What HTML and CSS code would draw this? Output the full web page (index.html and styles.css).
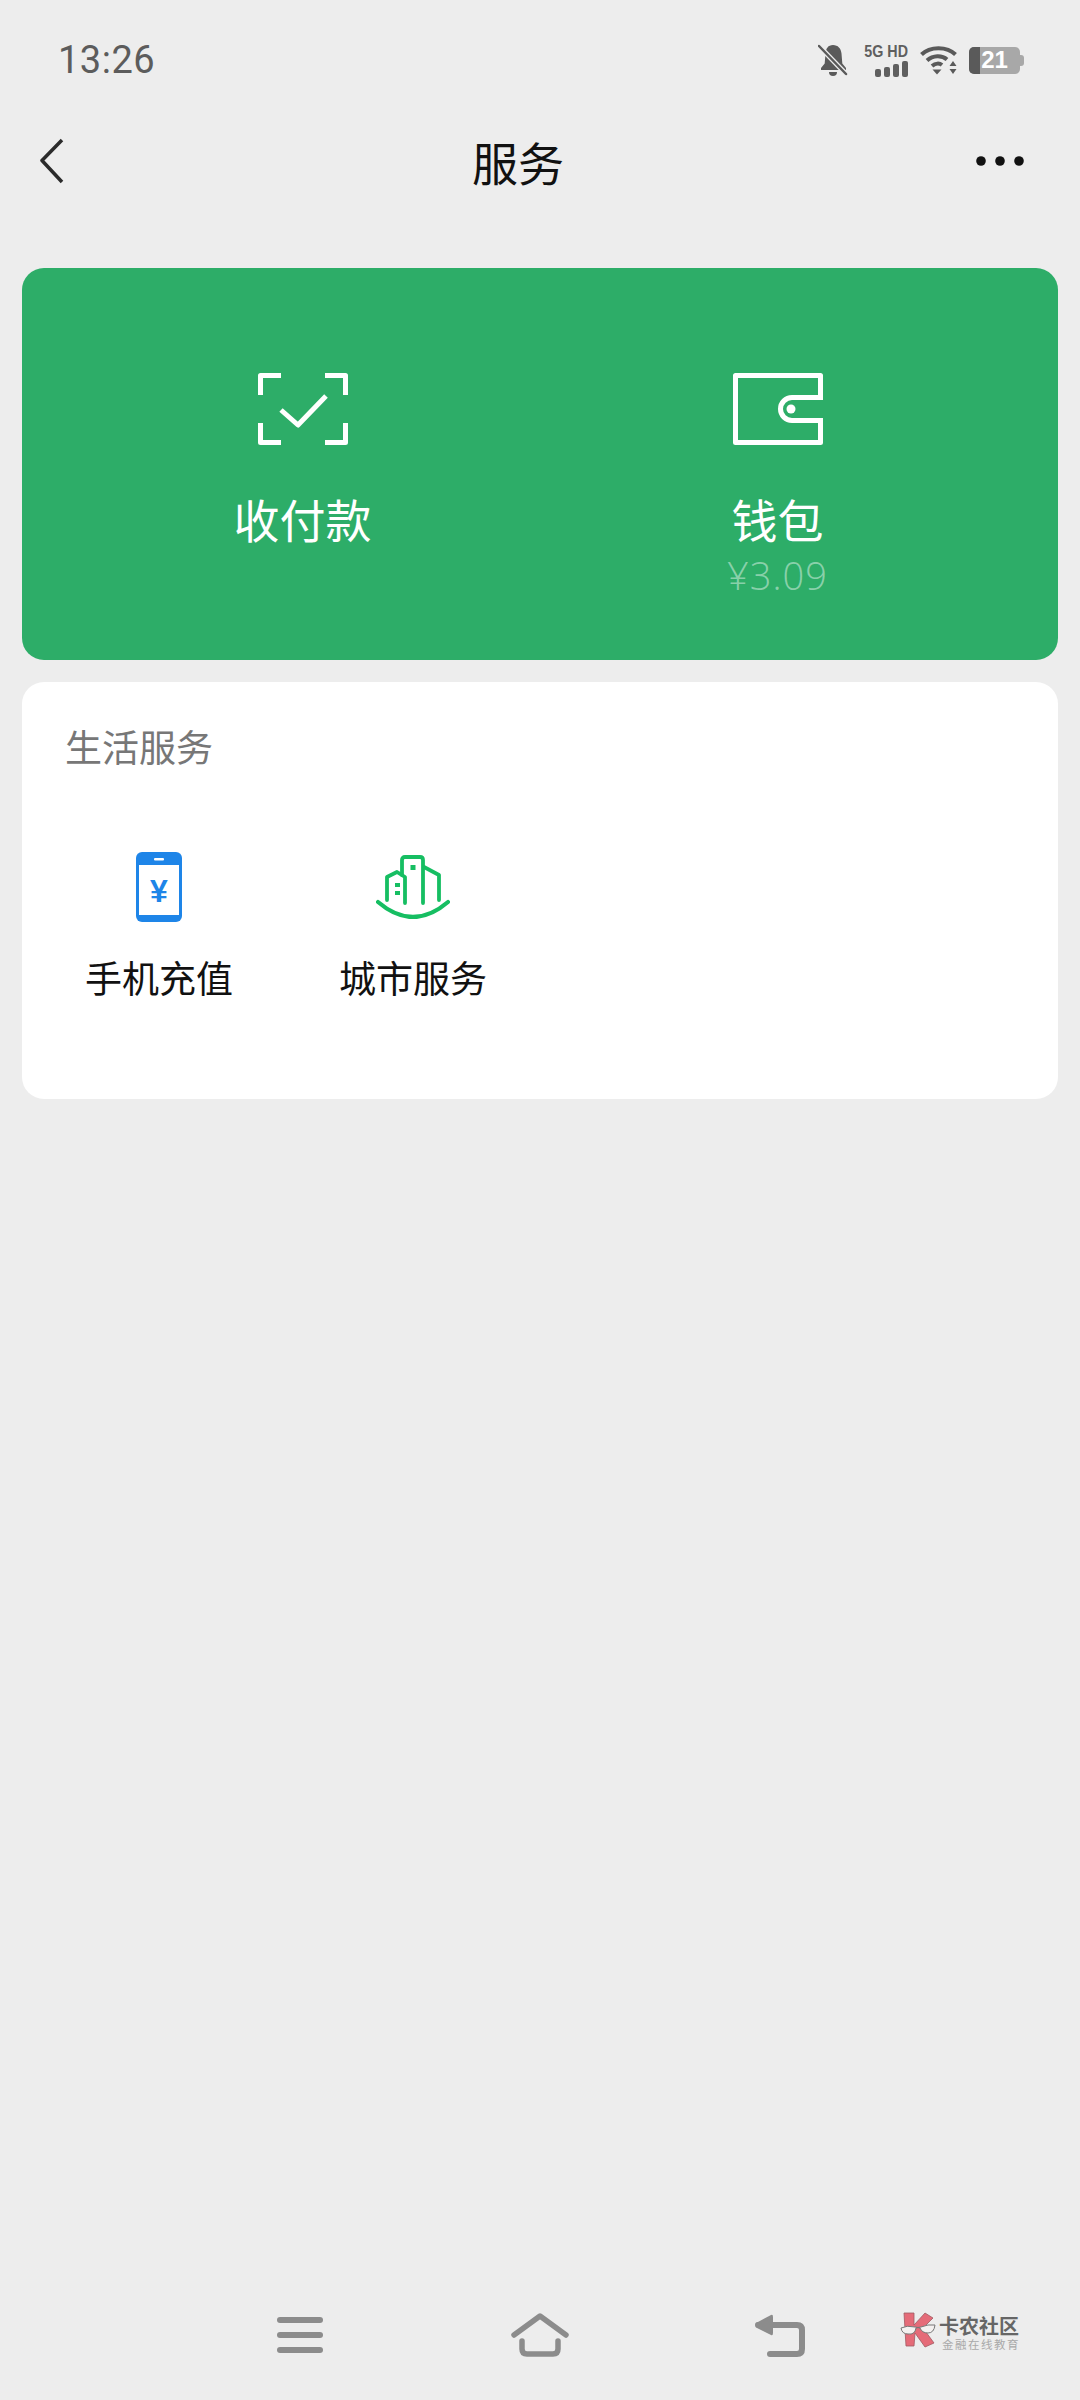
FILE: index.html

```html
<!DOCTYPE html>
<html lang="zh-CN">
<head>
  <meta charset="UTF-8" />
  <meta name="viewport" content="width=device-width, initial-scale=1.0"/>
  <title>服务</title>
  <link rel="stylesheet" href="styles.css">
</head>
<body>
  <div class="page">
    <header class="status-bar">
      <span class="time">13:26</span>
      <div class="status-icons">
        <svg class="bell" width="30" height="32" viewBox="0 0 30 32">
          <path d="M15 1c5 0 8 3.500 8.500 8.500l.8 10 3.700 4.500v2H3v-2l3.700-4.500.8-10C8 4.500 10 1 15 1z" fill="#5a5a5a"/>
          <path d="M11 28h8a4 4 0 0 1-8 0z" fill="#5a5a5a"/>
          <path d="M1 2l27 28" stroke="#ededed" stroke-width="5"/>
          <path d="M1 2l27 28" stroke="#5a5a5a" stroke-width="2.500" stroke-linecap="round"/>
        </svg>
        <div class="signal">
          <span class="signal-label">5G HD</span>
          <div class="signal-bars">
            <i class="bar bar-1"></i>
            <i class="bar bar-2"></i>
            <i class="bar bar-3"></i>
            <i class="bar bar-4"></i>
          </div>
        </div>
        <svg class="wifi" width="38" height="30" viewBox="0 0 38 30">
          <g fill="none" stroke="#5a5a5a" stroke-width="4">
            <path d="M1.500 9.500C10 1 27 1 35.500 9.500"/>
            <path d="M7 15.500c6-5.500 15-5.500 20 -1"/>
            <path d="M12 21c3.500-3 7.500-3 10 -1"/>
          </g>
          <path d="M12.500 24.500h9L17 29.500z" fill="#5a5a5a"/>
          <path d="M29.500 21h7l-3.500-5zM29.500 24h7l-3.500 5z" fill="#5a5a5a"/>
        </svg>
        <div class="battery">
          <div class="battery-level"></div>
          <span class="battery-text">21</span>
          <div class="battery-tip"></div>
        </div>
      </div>
    </header>

    <nav class="title-bar">
      <svg width="24" height="46" viewBox="0 0 24 46">
        <path d="M22 2L2 22.500 22 44" fill="none" stroke="#2b2b2b" stroke-width="3.500" stroke-linejoin="round"/>
      </svg>
      <h1 class="title">服务</h1>
      <svg width="48" height="10" viewBox="0 0 48 10">
        <circle cx="5" cy="5" r="4.800" fill="#111"/>
        <circle cx="24" cy="5" r="4.800" fill="#111"/>
        <circle cx="43" cy="5" r="4.800" fill="#111"/>
      </svg>
    </nav>

    <main class="content">
      <section class="pay-card">
        <div class="pay-item">
          <svg width="90" height="72" viewBox="0 0 90 72">
            <g fill="none" stroke="#fff" stroke-width="5" stroke-linejoin="round">
              <path d="M2.500 22V2.500H23"/>
              <path d="M67 2.500H87.500V22"/>
              <path d="M2.500 50V69.500H23"/>
              <path d="M67 69.500H87.500V50"/>
              <path d="M23 37l17 15 28-29"/>
            </g>
          </svg>
          <span class="pay-label">收付款</span>
        </div>
        <div class="pay-item">
          <svg width="90" height="72" viewBox="0 0 90 72">
            <path d="M87.500 24.500V2.500H2.500V69.500H87.500V47.500" fill="none" stroke="#fff" stroke-width="5" stroke-linejoin="round"/>
            <path d="M90 24.500H59a11.500 11.500 0 0 0 0 23H90" fill="none" stroke="#fff" stroke-width="5"/>
            <circle cx="58" cy="36" r="4.500" fill="#fff"/>
          </svg>
          <span class="pay-label">钱包</span>
          <span class="pay-amount">¥3.09</span>
        </div>
      </section>

      <section class="service-card">
        <h2 class="service-title">生活服务</h2>
        <div class="service-grid">
          <div class="service-item">
            <div class="service-icon">
              <svg width="46" height="70" viewBox="0 0 46 70">
                <rect width="46" height="70" rx="6" fill="#1e85e8"/>
                <rect x="3" y="13" width="40" height="50" fill="#fff"/>
                <rect x="18" y="6" width="10" height="2.500" rx="1" fill="#fff"/>
                <text x="23" y="50" text-anchor="middle" class="phone-yen">¥</text>
              </svg>
            </div>
            <span class="service-label">手机充值</span>
          </div>
          <div class="service-item">
            <div class="service-icon">
              <svg width="74" height="64" viewBox="0 0 74 64">
                <g fill="none" stroke="#16be62" stroke-width="3.800" stroke-linejoin="round" stroke-linecap="round">
                  <path d="M26 20V5q0-3 3-3H44q3 0 3 3V48"/>
                  <path d="M11 45V22l10-5 8 5V48"/>
                  <path d="M48 12l15 8V45"/>
                  <path d="M2 47Q37 77 72 47" stroke-width="4.200"/>
                </g>
                <rect x="34.500" y="10" width="5" height="5" fill="#16be62"/>
                <rect x="19" y="28" width="5" height="4" fill="#16be62"/>
                <rect x="19" y="36" width="5" height="4" fill="#16be62"/>
              </svg>
            </div>
            <span class="service-label">城市服务</span>
          </div>
        </div>
      </section>
    </main>

    <footer class="nav-bar">
      <svg width="46" height="36" viewBox="0 0 46 36">
        <g stroke="#8c8c8c" stroke-width="6" stroke-linecap="round">
          <path d="M3 3H43"/>
          <path d="M3 18H43"/>
          <path d="M3 33H43"/>
        </g>
      </svg>
      <svg width="58" height="44" viewBox="0 0 58 44">
        <g fill="none" stroke="#8c8c8c" stroke-width="5.500" stroke-linecap="round" stroke-linejoin="round">
          <path d="M3 22L29 3 55 22"/>
          <path d="M11 28V36q0 5 5 5H42q5 0 5-5V28"/>
        </g>
      </svg>
      <svg width="50" height="44" viewBox="0 0 50 44">
        <path d="M3 12H42q5 0 5 5V36q0 5-5 5H15" fill="none" stroke="#8c8c8c" stroke-width="6" stroke-linecap="round"/>
        <path d="M1 10L16 2q2-1 2 2V20q0 3-2 2L2 15q-2-2-1-5z" fill="#8c8c8c"/>
      </svg>
    </footer>

    <div class="watermark">
      <svg width="36" height="36" viewBox="0 0 36 36">
        <path d="M4 1H14V13L25 1 33 6 23 16 34 31 25 35 15 21 14 34H6z" fill="#e56b78" stroke="#a05a62" stroke-width=".8"/>
        <path d="M1 16q6-3 14-1 3 1 6 0 7-3 14-2-1 8-7 8t-8-5q-2-1-4 0-1 7-8 6-6 0-7-6z" fill="#f4f1f0" stroke="#777" stroke-width="1"/>
      </svg>
      <div class="watermark-text">
        <span class="watermark-name">卡农社区</span>
        <span class="watermark-sub">金融在线教育</span>
      </div>
    </div>
  </div>
</body>
</html>
```

FILE: styles.css

```css
* {
  box-sizing: border-box;
}
body {
  margin: 0;
  font-family: "Noto Sans CJK SC", "Noto Sans", sans-serif;
  background: #ededed;
}
.page {
  position: relative;
  width: 1080px;
  height: 2400px;
  display: flex;
  flex-direction: column;
  overflow: hidden;
}

/* Status bar */
.status-bar {
  height: 120px;
  padding: 0 60px 0 58px;
  display: flex;
  justify-content: space-between;
  align-items: center;
}
.time {
  font-family: Roboto, sans-serif;
  font-size: 38px;
  letter-spacing: 0.5px;
  color: #5c5c5c;
}
.status-icons {
  display: flex;
  align-items: center;
}
.bell {
  margin-right: 10px;
}
.signal {
  width: 50px;
  margin-right: 12px;
  display: flex;
  flex-direction: column;
  align-items: flex-end;
}
.signal-label {
  font-family: "Liberation Sans", sans-serif;
  font-size: 17px;
  font-weight: bold;
  line-height: 16px;
  color: #5f5f5f;
  white-space: nowrap;
  transform: scaleX(0.84);
  transform-origin: right;
}
.signal-bars {
  margin-top: 1px;
  display: flex;
  align-items: flex-end;
  gap: 3px;
}
.bar {
  width: 6px;
  border-radius: 2px;
  background: #5f5f5f;
}
.bar-1 {
  height: 8px;
}
.bar-2 {
  height: 10px;
}
.bar-3 {
  height: 13px;
}
.bar-4 {
  height: 16px;
}
.wifi {
  margin-right: 11px;
}
.battery {
  position: relative;
  width: 51px;
  height: 27px;
  border-radius: 5px;
  background: #a8a8a8;
  overflow: visible;
  display: flex;
  align-items: center;
  justify-content: center;
}
.battery-level {
  position: absolute;
  left: 0;
  top: 0;
  bottom: 0;
  width: 11px;
  border-radius: 5px 0 0 5px;
  background: #5a5a5a;
}
.battery-text {
  position: relative;
  font-family: "Liberation Sans", sans-serif;
  font-size: 24px;
  font-weight: bold;
  color: #fff;
}
.battery-tip {
  position: absolute;
  right: -4px;
  top: 8px;
  width: 4px;
  height: 11px;
  border-radius: 0 3px 3px 0;
  background: #a8a8a8;
}

/* Title bar */
.title-bar {
  height: 82px;
  padding: 0 56px 0 40px;
  display: flex;
  justify-content: space-between;
  align-items: center;
}
.title {
  margin: 0 0 0 -4px;
  font-size: 46px;
  font-weight: 400;
  line-height: 60px;
  color: #111;
}

/* Cards */
.content {
  margin-top: 66px;
  padding: 0 22px;
  display: flex;
  flex-direction: column;
  gap: 22px;
}
.pay-card {
  height: 392px;
  padding: 105px 43px 0;
  display: grid;
  grid-template-columns: 1fr 1fr;
  border-radius: 22px;
  background: #2dad68;
}
.pay-item {
  display: flex;
  flex-direction: column;
  align-items: center;
}
.pay-label {
  margin-top: 42px;
  font-size: 46px;
  line-height: 62px;
  color: #fff;
}
.pay-amount {
  margin-top: 2px;
  font-family: "Open Sans", sans-serif;
  font-size: 38px;
  font-weight: 300;
  line-height: 48px;
  letter-spacing: 1px;
  color: rgba(255, 255, 255, 0.45);
}
.service-card {
  height: 417px;
  padding: 0 10px;
  border-radius: 22px;
  background: #fff;
}
.service-title {
  margin: 39px 0 0 33px;
  font-size: 37px;
  font-weight: 400;
  line-height: 50px;
  color: #777;
}
.service-grid {
  margin-top: 81px;
  display: grid;
  grid-template-columns: repeat(4, 1fr);
}
.service-item {
  display: flex;
  flex-direction: column;
  align-items: center;
}
.service-icon {
  height: 70px;
  display: flex;
  align-items: center;
}
.phone-yen {
  font-family: "Liberation Sans", sans-serif;
  font-size: 32px;
  font-weight: bold;
  fill: #1e85e8;
}
.service-label {
  margin-top: 30px;
  font-size: 37px;
  line-height: 50px;
  color: #111;
}

/* System nav */
.nav-bar {
  margin-top: auto;
  height: 130px;
  padding: 0 180px;
  display: grid;
  grid-template-columns: repeat(3, 1fr);
  justify-items: center;
  align-items: center;
}
.watermark {
  position: absolute;
  left: 900px;
  top: 2312px;
  display: flex;
  gap: 3px;
}
.watermark-text {
  display: flex;
  flex-direction: column;
  padding-top: 3px;
}
.watermark-name {
  font-size: 20px;
  font-weight: 700;
  line-height: 22px;
  color: #666;
}
.watermark-sub {
  font-size: 11.500px;
  line-height: 14px;
  letter-spacing: 1.500px;
  margin-left: 3px;
  white-space: nowrap;
  color: #a9a9a9;
}
```
